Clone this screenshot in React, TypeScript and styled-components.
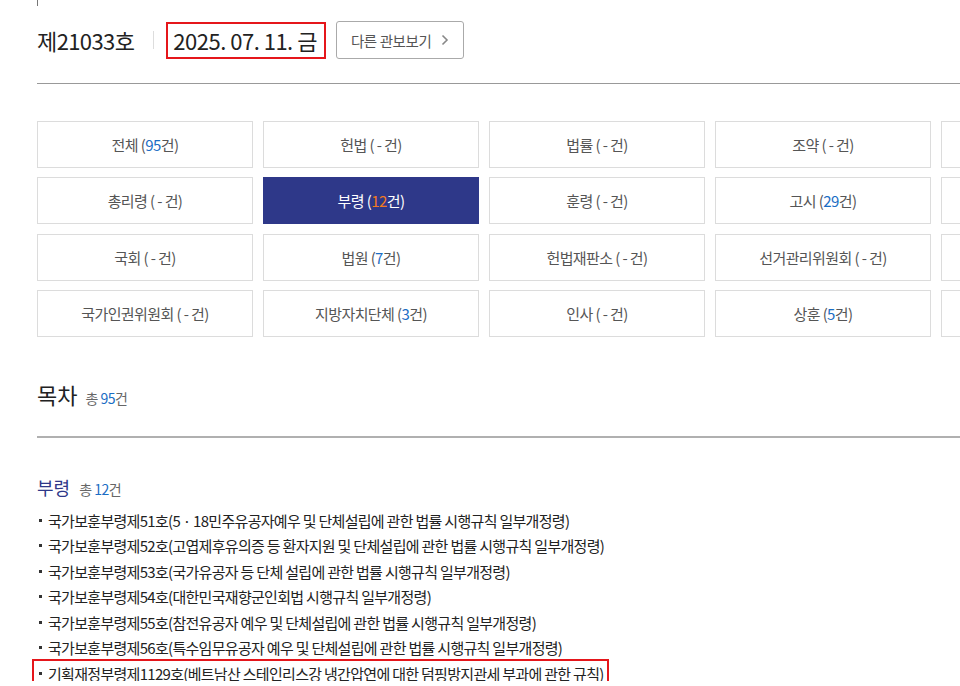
import React from "react";
import styled, { createGlobalStyle } from "styled-components";

const GlobalStyle = createGlobalStyle`
    html, body {
        margin: 0;
        padding: 0;
        background: #fff;
        overflow: hidden;
    }
    body {
        font-family: 'Noto Sans CJK KR', 'Noto Sans', sans-serif;
        color: #222;
    }
`;

const Page = styled.div`
    width: 1240px;
    padding-left: 37px;
    box-sizing: border-box;
`;

const TopTick = styled.div`
    width: 1px;
    height: 6px;
    background: #777;
`;

const Header = styled.div`
    display: flex;
    align-items: center;
    height: 38px;
    margin-top: 15px;
`;

const IssueNo = styled.span`
    font-size: 22px;
    letter-spacing: -0.6px;
    color: #222;
`;

const Divider = styled.span`
    width: 1px;
    height: 18px;
    background: #ddd;
    margin: 0 12px 0 19px;
`;

const DateBox = styled.div`
    box-sizing: border-box;
    height: 37px;
    padding: 0 7px 0 5px;
    border: 2px solid #e5161b;
    display: flex;
    align-items: center;
    font-size: 22px;
    letter-spacing: -0.5px;
    color: #222;
`;

const OtherButton = styled.button`
    box-sizing: border-box;
    height: 38px;
    margin-left: 10px;
    padding: 0 14px 0 14px;
    border: 1px solid #aaa;
    border-radius: 3px;
    background: #fff;
    font-family: inherit;
    font-size: 14.5px;
    letter-spacing: -0.4px;
    color: #555;
    display: flex;
    align-items: center;
    gap: 10px;
`;

const Rule = styled.hr<{ $top: number; $color: string; $size: number }>`
    margin: ${(p) => p.$top}px 0 0;
    border: 0;
    border-top: ${(p) => p.$size}px solid ${(p) => p.$color};
`;

const Grid = styled.div`
    margin-top: 37px;
    display: grid;
    grid-template-columns: repeat(5, 216px);
    grid-auto-rows: 47px;
    column-gap: 10px;
    row-gap: 9.3px;
`;

const Cell = styled.div<{ $active?: boolean }>`
    box-sizing: border-box;
    border: 1px solid ${(p) => (p.$active ? "#2e3889" : "#dcdcdc")};
    background: ${(p) => (p.$active ? "#2e3889" : "#fff")};
    color: ${(p) => (p.$active ? "#fff" : "#555")};
    display: flex;
    align-items: center;
    justify-content: center;
    font-size: 15px;
    letter-spacing: -0.6px;
`;

const Count = styled.span<{ $active?: boolean }>`
    color: ${(p) => (p.$active ? "#f47a20" : "#1a6dc4")};
`;

const TocTitle = styled.div`
    margin-top: 41px;
    display: flex;
    align-items: baseline;
    gap: 8px;
`;

const TocHeading = styled.span`
    font-size: 22px;
    color: #222;
`;

const Total = styled.span`
    font-size: 14px;
    color: #666;
    letter-spacing: -0.5px;
`;

const Blue = styled.span`
    color: #1a6dc4;
`;

const GroupTitle = styled.div`
    margin-top: 36px;
    display: flex;
    align-items: baseline;
    gap: 9px;
`;

const GroupName = styled.span`
    font-size: 18px;
    color: #2e3889;
`;

const List = styled.ul`
    list-style: none;
    margin: 3px 0 0 -5px;
    padding: 0;
`;

const Row = styled.li`
    display: block;
    height: 25.5px;
`;

const Entry = styled.span<{ $marked?: boolean }>`
    box-sizing: border-box;
    display: inline-flex;
    align-items: center;
    height: ${(p) => (p.$marked ? "28px" : "25.5px")};
    margin-top: ${(p) => (p.$marked ? "-1px" : "0")};
    padding: 0 3px 0 5px;
    border: 2px solid ${(p) => (p.$marked ? "#e5161b" : "transparent")};
    font-size: 15px;
    letter-spacing: -0.7px;
    color: #222;
    &::before {
        content: "";
        width: 3px;
        height: 3px;
        background: #333;
        margin-right: 6px;
        flex-shrink: 0;
    }
`;

const categories: { name?: string; count?: string }[] = [
    { name: "전체", count: "95" },
    { name: "헌법" },
    { name: "법률" },
    { name: "조약" },
    {},
    { name: "총리령" },
    { name: "부령", count: "12" },
    { name: "훈령" },
    { name: "고시", count: "29" },
    {},
    { name: "국회" },
    { name: "법원", count: "7" },
    { name: "헌법재판소" },
    { name: "선거관리위원회" },
    {},
    { name: "국가인권위원회" },
    { name: "지방자치단체", count: "3" },
    { name: "인사" },
    { name: "상훈", count: "5" },
    {},
];

const items = [
    "국가보훈부령제51호(5 · 18민주유공자예우 및 단체설립에 관한 법률 시행규칙 일부개정령)",
    "국가보훈부령제52호(고엽제후유의증 등 환자지원 및 단체설립에 관한 법률 시행규칙 일부개정령)",
    "국가보훈부령제53호(국가유공자 등 단체 설립에 관한 법률 시행규칙 일부개정령)",
    "국가보훈부령제54호(대한민국재향군인회법 시행규칙 일부개정령)",
    "국가보훈부령제55호(참전유공자 예우 및 단체설립에 관한 법률 시행규칙 일부개정령)",
    "국가보훈부령제56호(특수임무유공자 예우 및 단체설립에 관한 법률 시행규칙 일부개정령)",
    "기획재정부령제1129호(베트남산 스테인리스강 냉간압연에 대한 덤핑방지관세 부과에 관한 규칙)",
];

const Chevron = () => (
    <svg width="8" height="12" viewBox="0 0 8 12" fill="none">
        <path d="M1.5 1.5 L6 6 L1.5 10.5" stroke="#888" strokeWidth="1.6" />
    </svg>
);

const App = () => {
    return <Page>
        <GlobalStyle />
        <TopTick />
        <Header>
            <IssueNo>제21033호</IssueNo>
            <Divider />
            <DateBox>2025. 07. 11. 금</DateBox>
            <OtherButton>다른 관보보기 <Chevron /></OtherButton>
        </Header>
        <Rule $top={24} $color="#999" $size={1} />
        <Grid>
            {categories.map((c, i) => {
                if (!c.name) return <Cell key={i} />;
                const active = c.name === "부령";
                return <Cell key={i} $active={active}>
                    {c.name}&nbsp;(
                    {c.count ? <><Count $active={active}>{c.count}</Count>건</> : " - 건"})
                </Cell>;
            })}
        </Grid>
        <TocTitle>
            <TocHeading>목차</TocHeading>
            <Total>총 <Blue>95</Blue>건</Total>
        </TocTitle>
        <Rule $top={26} $color="#b0b0b0" $size={2} />
        <GroupTitle>
            <GroupName>부령</GroupName>
            <Total>총 <Blue>12</Blue>건</Total>
        </GroupTitle>
        <List>
            {items.map((t, i) => (
                <Row key={i}>
                    <Entry $marked={i === items.length - 1}>{t}</Entry>
                </Row>
            ))}
        </List>
    </Page>;
};

export default App;
